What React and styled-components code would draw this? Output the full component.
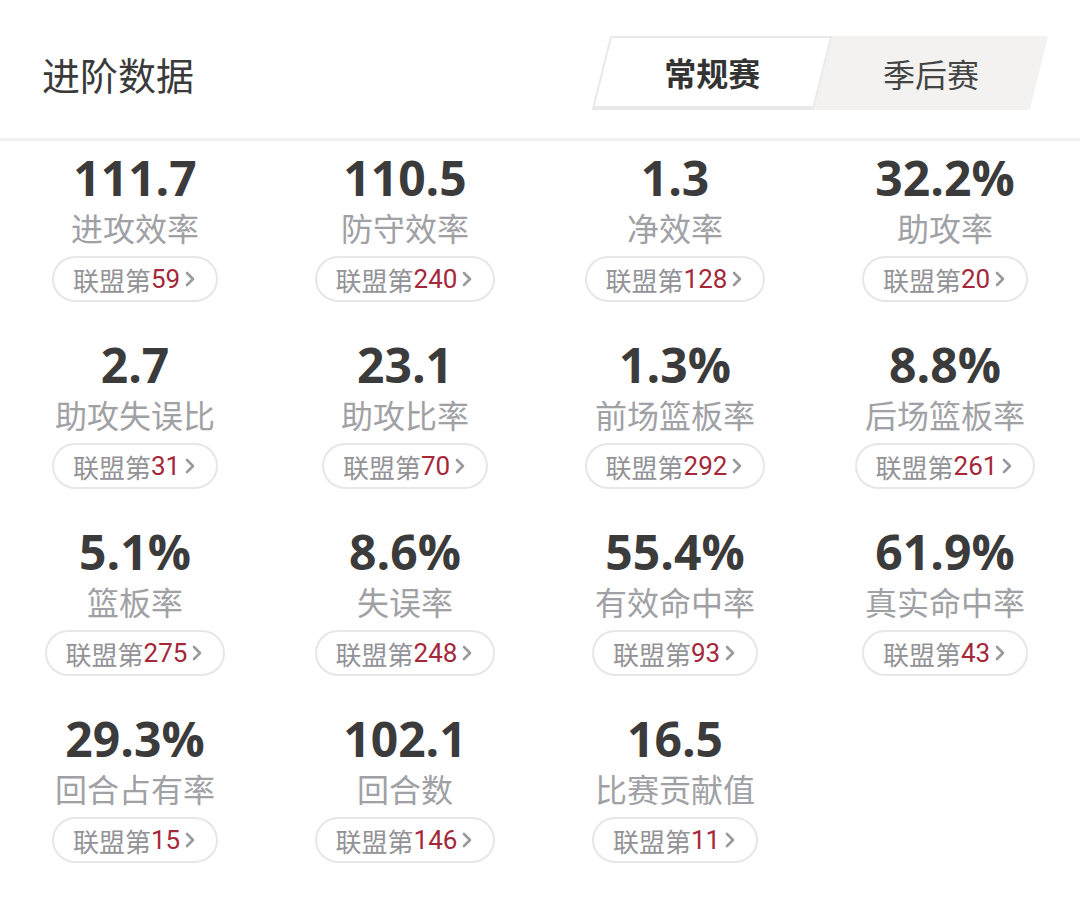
import React from 'react'
import styled, { createGlobalStyle } from 'styled-components'

const GlobalStyle = createGlobalStyle`
    body {
        margin : 0;
        background : #ffffff;
        font-family : "Noto Sans", "Noto Sans CJK SC", sans-serif;
    }
`

const Page = styled.div`
    width : 1080px;
    background : #ffffff;
`

const Header = styled.div`
    display : flex;
    align-items : center;
    justify-content : space-between;
    height : 130px;
    padding-top : 8px;
    border-bottom : 3px solid #f0f0f0;
`

const Title = styled.h1`
    margin : 0 0 0 42px;
    font-size : 38px;
    font-weight : 400;
    color : #3a3a3a;
    font-family : "Noto Sans CJK SC", sans-serif;
`

const Tabs = styled.div`
    display : flex;
    width : 438px;
    height : 74px;
    margin-right : 41px;
    background : #f3f2f1;
    transform : skewX(-14deg);
`

const Tab = styled.div`
    flex : ${p => p.$active ? '0 0 222px' : '1'};
    display : flex;
    align-items : center;
    justify-content : center;
    box-sizing : border-box;
    background : ${p => p.$active ? '#ffffff' : 'transparent'};
    border : ${p => p.$active ? '2px solid #e9e9e9' : 'none'};
    border-bottom-width : ${p => p.$active ? '4px' : '0'};
`

const TabLabel = styled.span`
    transform : skewX(14deg);
    font-size : 32px;
    font-weight : ${p => p.$active ? 700 : 400};
    color : ${p => p.$active ? '#333333' : '#444444'};
    font-family : "Noto Sans CJK SC", sans-serif;
`

const Grid = styled.div`
    display : grid;
    grid-template-columns : repeat(4, 270px);
    row-gap : 37px;
    padding-top : 11px;
`

const Cell = styled.div`
    display : flex;
    flex-direction : column;
    align-items : center;
`

const Value = styled.div`
    font-family : "Open Sans", sans-serif;
    font-weight : 700;
    font-size : 48px;
    line-height : 52px;
    color : #3b3b3b;
`

const Label = styled.div`
    font-family : "Noto Sans CJK SC", sans-serif;
    font-size : 32px;
    line-height : 46px;
    color : #a0a1a5;
`

const Pill = styled.div`
    display : inline-flex;
    align-items : center;
    box-sizing : border-box;
    height : 46px;
    margin-top : 6px;
    padding : 0 20px 0 19px;
    border : 2px solid #e7e7e7;
    border-radius : 23px;
`

const League = styled.span`
    font-family : "Noto Sans CJK SC", sans-serif;
    font-size : 26px;
    color : #939397;
`

const Rank = styled.span`
    font-family : Roboto, sans-serif;
    font-size : 26px;
    color : #a4283a;
`

const Chevron = () => (
    <svg width="12" height="16" viewBox="0 0 12 16" style={{ marginLeft: 4 }}>
        <polyline points="3,2 9,8 3,14" fill="none" stroke="#9a9a9e" strokeWidth="2.6" strokeLinecap="round" strokeLinejoin="round" />
    </svg>
)

const stats = [
    ['111.7', '进攻效率', 59],
    ['110.5', '防守效率', 240],
    ['1.3', '净效率', 128],
    ['32.2%', '助攻率', 20],
    ['2.7', '助攻失误比', 31],
    ['23.1', '助攻比率', 70],
    ['1.3%', '前场篮板率', 292],
    ['8.8%', '后场篮板率', 261],
    ['5.1%', '篮板率', 275],
    ['8.6%', '失误率', 248],
    ['55.4%', '有效命中率', 93],
    ['61.9%', '真实命中率', 43],
    ['29.3%', '回合占有率', 15],
    ['102.1', '回合数', 146],
    ['16.5', '比赛贡献值', 11],
]

export default function App() {
  return (
    <Page>
        <GlobalStyle />
        <Header>
            <Title>进阶数据</Title>
            <Tabs>
                <Tab $active><TabLabel $active>常规赛</TabLabel></Tab>
                <Tab><TabLabel>季后赛</TabLabel></Tab>
            </Tabs>
        </Header>
        <Grid>
            {stats.map(([value, label, rank]) => (
                <Cell key={label}>
                    <Value>{value}</Value>
                    <Label>{label}</Label>
                    <Pill>
                        <League>联盟第</League>
                        <Rank>{rank}</Rank>
                        <Chevron />
                    </Pill>
                </Cell>
            ))}
        </Grid>
    </Page>
  )
}
